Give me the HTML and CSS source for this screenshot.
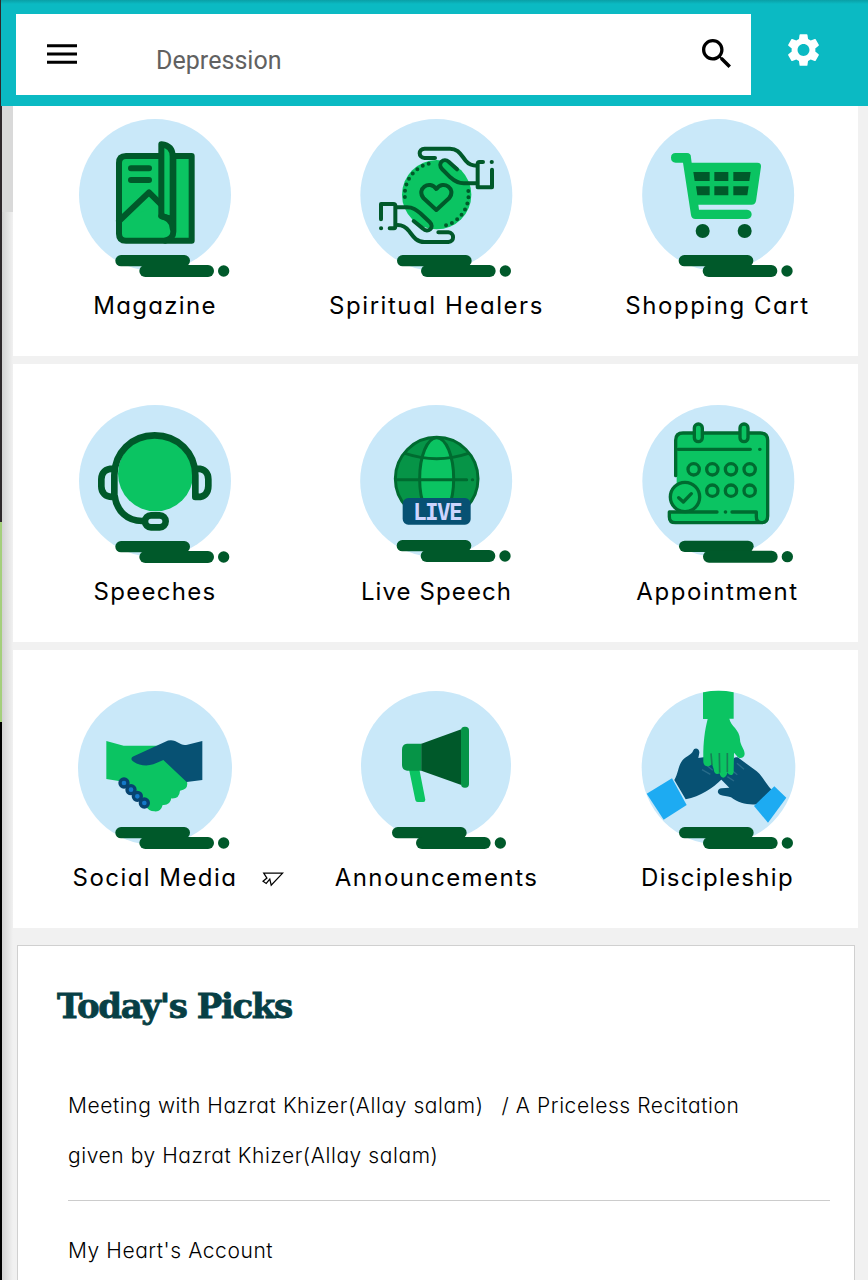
FILE: index.html
```
<!DOCTYPE html>
<html lang="en">

<head>
    <meta charset="UTF-8">
    <meta name="viewport" content="width=device-width, initial-scale=1.0">
    <title>Home</title>
    <link rel="stylesheet" href="styles.css">
</head>

<body>

    <!-- Header -->
    <header class="header">
        <div class="search-box">
            <svg class="menu-icon" viewBox="0 0 30 20">
                <path d="M0 1.8h30M0 10h30M0 18.2h30" stroke="#000" stroke-width="3" />
            </svg>
            <span class="search-text">Depression</span>
            <svg class="search-icon" viewBox="3 3 17.5 17.5">
                <path d="M15.5 14h-.79l-.28-.27C15.41 12.59 16 11.11 16 9.5 16 5.91 13.09 3 9.5 3S3 5.91 3 9.5 5.91 16 9.5 16c1.61 0 3.09-.59 4.23-1.57l.27.28v.79l5 4.99L20.49 19l-4.99-5zm-6 0C7.01 14 5 11.99 5 9.5S7.01 5 9.5 5 14 7.01 14 9.5 11.99 14 9.5 14z" />
            </svg>
        </div>
        <svg class="settings-icon" viewBox="2 2 20 20">
            <path fill="#fff" d="M19.14 12.94c.04-.3.06-.61.06-.94s-.02-.64-.07-.94l2.03-1.58c.18-.14.23-.41.12-.61l-1.92-3.32c-.12-.22-.37-.29-.59-.22l-2.39.96c-.5-.38-1.03-.7-1.62-.94l-.36-2.54c-.04-.24-.24-.41-.48-.41h-3.84c-.24 0-.43.17-.47.41l-.36 2.54c-.59.24-1.13.57-1.62.94l-2.39-.96c-.22-.08-.47 0-.59.22L2.74 8.87c-.12.21-.08.47.12.61l2.03 1.58c-.05.3-.09.63-.09.94s.02.64.07.94l-2.03 1.58c-.18.14-.23.41-.12.61l1.92 3.32c.12.22.37.29.59.22l2.39-.96c.5.38 1.03.7 1.62.94l.36 2.54c.05.24.24.41.48.41h3.84c.24 0 .44-.17.47-.41l.36-2.54c.59-.24 1.13-.56 1.62-.94l2.39.96c.22.08.47 0 .59-.22l1.92-3.32c.12-.22.07-.47-.12-.61l-2.01-1.58zM12 15.6c-1.98 0-3.6-1.62-3.6-3.6s1.62-3.6 3.6-3.6 3.6 1.62 3.6 3.6-1.62 3.6-3.6 3.6z" />
        </svg>
    </header>

    <!-- Menu -->
    <main class="menu">
        <div class="menu-row">
            <div class="tile">
                <svg class="tile-icon" viewBox="45 21 480 492">
                    <defs>
                        <g id="bars" fill="#00592a">
                            <rect x="166" y="435" width="224" height="34" rx="17" />
                            <rect x="238" y="465" width="224" height="36" rx="18" />
                            <circle cx="491" cy="483" r="17" />
                        </g>
                    </defs>
                    <circle cx="285" cy="255" r="228" fill="#c9e8f9" />
                    <use href="#bars" />
                    <g fill="#0bc462" stroke="#00592a" stroke-width="18" stroke-linejoin="round" stroke-linecap="round">
                        <path d="M198 138h197v254H198q-21 0-21-21V159q0-21 21-21z" />
                        <path d="M177 333l90-86 36 36" />
                        <path d="M340 145v220q0 20-24 27" />
                        <path d="M304 103q34 4 34 36v189l-34-10z" />
                        <path d="M304 318q34 8 34 37" fill="none" />
                        <path d="M213 175h54M213 210h54" />
                    </g>
                </svg>
                <span class="label magazine">Magazine</span>
            </div>
            <div class="tile">
                <svg class="tile-icon" viewBox="111 21 480 492">
                    <circle cx="349" cy="255" r="228" fill="#c9e8f9" />
                    <use href="#bars" x="65" />
                    <circle cx="350" cy="254" r="104" fill="#0bc462" />
                    <g fill="none" stroke="#00592a" stroke-width="12" stroke-linecap="round" stroke-linejoin="round">
                        <path d="M326 161A96 96 0 0 0 256 272M445 243A96 96 0 0 1 366 349" stroke-dasharray="0 19" />
                        <path d="M349 300l-38-35c-24-28 17-57 38-28 21-29 62 0 38 28z" />
                        <!-- Upper hand -->
                        <path d="M345 144h-31c-20-2-20-27 0-28h76c25 0 32 18 47 36 10 12 18 15 34 15M471 220h-40c-17 0-27-6-40-18l-25-25c-15-17 5-35 20-22l25 23" />
                        <path d="M489 156h-10q-6 0-6 6v70h43v-53M515 156h.5" />
                        <!-- Lower hand -->
                        <path d="M355 367h30c19 2 19 27 0 29h-72c-24 0-34-17-46-33-11-14-20-18-34-18M228 292h33c18 0 27 7 40 18l28 26c17 17-6 34-20 20l-28-23" />
                        <path d="M209 355h13q4 0 4-6v-61q0-6-6-6h-37v46M183 355h.5" />
                    </g>
                </svg>
                <span class="label healers">Spiritual Healers</span>
            </div>
            <div class="tile">
                <svg class="tile-icon" viewBox="84 21 480 492">
                    <circle cx="324.5" cy="255" r="228" fill="#c9e8f9" />
                    <use href="#bars" x="40" />
                    <path fill="#0bc462" d="M197 129h34q12 0 12 14l2 15h197q12 0 11 12l-15 103q-2 11-13 11H265l2 15h144q14 2 14 14t-14 14H256q-11 0-13-12l-24-157h-22q-14-1-14-15t14-14z" />
                    <g fill="#00592a">
                        <path d="M250 186h49v27h-45zM313 186h42v27h-42zM370 186h52l-4 27h-48zM258 229h41v27h-37zM313 229h42v27h-42zM370 229h46l-4 27h-42z" />
                        <circle cx="278" cy="363" r="21" />
                        <circle cx="404" cy="363" r="21" />
                    </g>
                </svg>
                <span class="label cart">Shopping Cart</span>
            </div>
        </div>

        <div class="menu-row">
            <div class="tile">
                <svg class="tile-icon" viewBox="45 24 480 492">
                    <circle cx="285" cy="258" r="228" fill="#c9e8f9" />
                    <use href="#bars" y="3" />
                    <circle cx="287" cy="236" r="113" fill="#0bc462" />
                    <g fill="none" stroke="#00592a" stroke-width="20" stroke-linejoin="round">
                        <path d="M165 306h-8c-20 0-33-12-33-32v-21c0-20 13-32 35-32M163 306v-65c0-68 52-120 121-120s122 52 122 120v65h7c21 0 32-12 32-33v-20c0-20-11-32-33-32M164 303c6 45 38 75 82 75h10" />
                        <rect x="255" y="361" width="62" height="36" rx="18" />
                    </g>
                </svg>
                <span class="label speeches">Speeches</span>
            </div>
            <div class="tile">
                <svg class="tile-icon" viewBox="51 24 480 492">
                    <circle cx="288.5" cy="258" r="228" fill="#c9e8f9" />
                    <use href="#bars" x="4" />
                    <circle cx="290" cy="251" r="124" fill="#069447" />
                    <ellipse cx="290" cy="251" rx="51" ry="123" fill="#0bc462" />
                    <g fill="none" stroke="#006b30" stroke-width="9" stroke-linecap="round">
                        <circle cx="290" cy="251" r="124" />
                        <ellipse cx="290" cy="251" rx="51" ry="123" />
                        <path d="M195 175q95 32 190 0M167 254h213M397 254h1" />
                    </g>
                    <rect x="188" y="309" width="204" height="80" rx="17" fill="#075173" />
                    <text class="live-text" x="219" y="376" textLength="149">LIVE</text>
                </svg>
                <span class="label live">Live Speech</span>
            </div>
            <div class="tile">
                <svg class="tile-icon" viewBox="54 24 480 492">
                    <circle cx="295" cy="258" r="228" fill="#c9e8f9" />
                    <use href="#bars" x="11" y="2" />
                    <path fill="#0bc462" d="M190 114h232q22 0 22 22v232q0 15-15 15H166q-18 0-18-15v-20h22V136q0-22 20-22z" />
                    <g fill="none" stroke="#006b30" stroke-width="10" stroke-linecap="round" stroke-linejoin="round">
                        <path d="M167 242V136q0-22 22-22h232q22 0 22 22v227q0 20-18 20-16 0-16-18v-14h-73M291 351H148v14q0 18 18 18h260M316 351h1M175 163h216M419 163h1" />
                        <g fill="#0bc462">
                            <rect x="223" y="87" width="24" height="53" rx="12" />
                            <rect x="360" y="87" width="24" height="53" rx="12" />
                            <circle cx="195" cy="306" r="44" />
                            <circle cx="221" cy="223" r="17" />
                            <circle cx="277" cy="223" r="17" />
                            <circle cx="333" cy="223" r="17" />
                            <circle cx="389" cy="223" r="17" />
                            <circle cx="277" cy="287" r="17" />
                            <circle cx="333" cy="287" r="17" />
                            <circle cx="389" cy="287" r="17" />
                        </g>
                        <path d="M176 308l14 13 24-25" />
                    </g>
                </svg>
                <span class="label appointment">Appointment</span>
            </div>
        </div>

        <div class="menu-row">
            <div class="tile">
                <svg class="tile-icon" viewBox="45 27 480 492">
                    <circle cx="285" cy="264" r="231" fill="#c9e8f9" />
                    <use href="#bars" y="6" />
                    <path fill="#0bc462" d="M139 183l52 14h145l45 108q5 24-21 27-2 25-26 23-4 22-26 20-6 22-25 19-18-2-24-14l-78-76-42-7z" />
                    <path fill="#075173" d="M427 183v117l-47 6-70-66-30 13c-26 8-53 0-65-13-2-6 1-9 6-11l95-44q14-7 29-2l19 10q8 3 18 1z" />
                    <g fill="#1478c8" stroke="#07436f" stroke-width="10">
                        <circle cx="192" cy="309" r="12" />
                        <circle cx="213" cy="329" r="12" />
                        <circle cx="232" cy="349" r="12" />
                        <circle cx="253" cy="369" r="12" />
                    </g>
                </svg>
                <span class="label social">Social Media</span>
                <svg class="pointer" viewBox="609 580 60 42">
                    <path fill="#fff" stroke="#000" stroke-width="3.5" d="M613 583h53l-32 34-4-17-10 12-9-6 11-9z" />
                </svg>
            </div>
            <div class="tile">
                <svg class="tile-icon" viewBox="111 27 480 492">
                    <circle cx="348" cy="258" r="225" fill="#c9e8f9" />
                    <use href="#bars" x="50" y="6" />
                    <path fill="#0bc462" d="M267 268h31l18 91q0 7-6 7h-17q-6 0-7-6z" />
                    <path fill="#069447" d="M261 191h44v81h-44q-15-2-15-17v-47q0-15 15-17z" />
                    <path fill="#00592a" d="M304 191l120-43v167l-120-43z" />
                    <rect x="423" y="140" width="24" height="183" rx="11" fill="#069447" />
                </svg>
                <span class="label announce">Announcements</span>
            </div>
            <div class="tile">
                <svg class="tile-icon" viewBox="54 27 480 492">
                    <defs>
                        <clipPath id="discClip">
                            <circle cx="295.5" cy="263" r="230.5" />
                        </clipPath>
                    </defs>
                    <circle cx="295.5" cy="263" r="230.5" fill="#c9e8f9" />
                    <g clip-path="url(#discClip)">
                        <!-- Left hand -->
                        <path fill="#075173" d="M163 300c12-20 12-45 25-60 13-12 27-17 31-27 4-13 20-8 19 5l-3 16 65-10 7 72c-30 30-65 52-110 62z" />
                        <path fill="#1dabf2" d="M80 341l76-46 44 80-69 44z" />
                        <!-- Right hand -->
                        <path fill="#075173" d="M455 329l-44 44c-28 3-55-4-78-21-12-4-24-5-33-8-11-6-7-18 5-19l23-2-29-29 39-42c-3-15 5-23 15-20l48 35c25 15 36 45 54 62z" />
                        <path fill="#1dabf2" d="M402 378l61-59 36 34-55 75z" />
                        <path d="M246 269l25 14M260 256l18 15M322 290l20 13M334 270l18 14M351 250l21 18" stroke="#286b89" stroke-width="4" fill="none" />
                        <!-- Top hand -->
                        <path fill="#0bc462" d="M249 25h92v91h-13c4 22 31 32 32 62 0 18 14 29 14 44-1 13-17 17-24 5l-8-9-1 57c0 12-14 14-19 2-3 22-21 20-23 3-10 5-17 0-18-13l-5-15c-10 12-25 8-26-6-1-51 3-90 13-129h-14z" />
                        <path d="M273 220l3 35M298 219l1 59M322 219v57" stroke="#168056" stroke-width="5" />
                    </g>
                    <use href="#bars" x="11" y="6" />
                </svg>
                <span class="label disciple">Discipleship</span>
            </div>
        </div>
    </main>

    <!-- Picks -->
    <section class="picks">
        <h2>Today's Picks</h2>
        <ul class="pick-list">
            <li>Meeting with Hazrat Khizer(Allay salam)<span class="second">/ A Priceless Recitation</span><br>given by Hazrat Khizer(Allay salam)</li>
            <li>My Heart's Account</li>
        </ul>
    </section>

</body>

</html>
```

FILE: styles.css
```
* {
    margin: 0;
    padding: 0;
    box-sizing: border-box;
}

/* Page, with the narrow strip and shadow on the left side */
body {
    width: 868px;
    height: 1280px;
    overflow: hidden;
    font-family: Inter, "Liberation Sans", sans-serif;
    font-feature-settings: "cv11";
    color: #000;
    background:
        linear-gradient(#2e282b 522px, #a4cf7c 522px, #a4cf7c 722px, #000 722px) 0 0 / 2px 100% no-repeat,
        linear-gradient(#d9d9d9, #d9d9d9) 2px 0 / 11px 212px no-repeat,
        linear-gradient(to right, #d2d2d2, #f1f1f1) 2px 0 / 11px 100% no-repeat,
        #f1f1f1;
}

svg {
    display: block;
}

/* Header */
.header {
    position: relative;
    z-index: 1;
    height: 106px;
    margin-left: 1px;
    padding: 14px 48px 11px 15px;
    display: flex;
    justify-content: space-between;
    background: linear-gradient(#0a9fa6, #0bbac3 4px);
}

.search-box {
    width: 735px;
    height: 81px;
    padding: 0 20px 0 31px;
    display: flex;
    align-items: center;
    background: #fff;
}

.menu-icon {
    width: 30px;
    height: 20px;
    margin-bottom: 1px;
}

.search-text {
    flex: 1;
    margin-left: 79px;
    padding-top: 11px;
    font-family: Roboto, sans-serif;
    font-size: 25px;
    letter-spacing: 0.05px;
    color: #616161;
}

.search-icon {
    width: 29px;
    height: 29px;
    margin-bottom: 2px;
}

.settings-icon {
    width: 33px;
    height: 34px;
    margin-top: 19px;
}

/* Menu rows */
.menu {
    margin: -28px 10px 0 13px;
    display: flex;
    flex-direction: column;
    gap: 8px;
}

.menu-row {
    height: 278px;
    padding: 39px 0 0 1px;
    display: grid;
    grid-template-columns: 282px 281px 281px;
    background: #fff;
}

.tile {
    position: relative;
    display: flex;
    flex-direction: column;
    align-items: center;
}

.tile-icon {
    width: 160px;
    height: 164px;
}

.label {
    margin-top: 9px;
    font-size: 24px;
    line-height: 32px;
    letter-spacing: 1.3px;
    white-space: nowrap;
}

.healers,
.cart,
.appointment {
    letter-spacing: 1.55px;
}

.live {
    letter-spacing: 1.1px;
}

.social,
.announce {
    letter-spacing: 1.45px;
}

.live-text {
    font-family: "DejaVu Sans Mono", monospace;
    font-size: 68px;
    font-weight: bold;
    fill: #cdd5ff;
}

.pointer {
    position: absolute;
    left: 248px;
    top: 183px;
    width: 22px;
    height: 15px;
}

/* Picks */
.picks {
    height: 340px;
    margin: 17px 13px 0 17px;
    padding: 40px 24px 0 39px;
    background: #fff;
    border: 1px solid #d0d0d0;
}

.picks h2 {
    font-family: "DejaVu Serif", serif;
    font-size: 34px;
    line-height: 40px;
    letter-spacing: -1.4px;
    color: #073f45;
    -webkit-text-stroke: 0.8px #073f45;
}

.pick-list {
    margin-left: 11px;
    padding-top: 55px;
    list-style: none;
    font-size: 21px;
    font-weight: 300;
    line-height: 50px;
    letter-spacing: 0.57px;
    white-space: nowrap;
}

.pick-list li {
    padding-bottom: 19px;
    border-bottom: 1px solid #ccc;
}

.pick-list li + li {
    padding-top: 25px;
}

.second {
    margin-left: 18px;
}
```
